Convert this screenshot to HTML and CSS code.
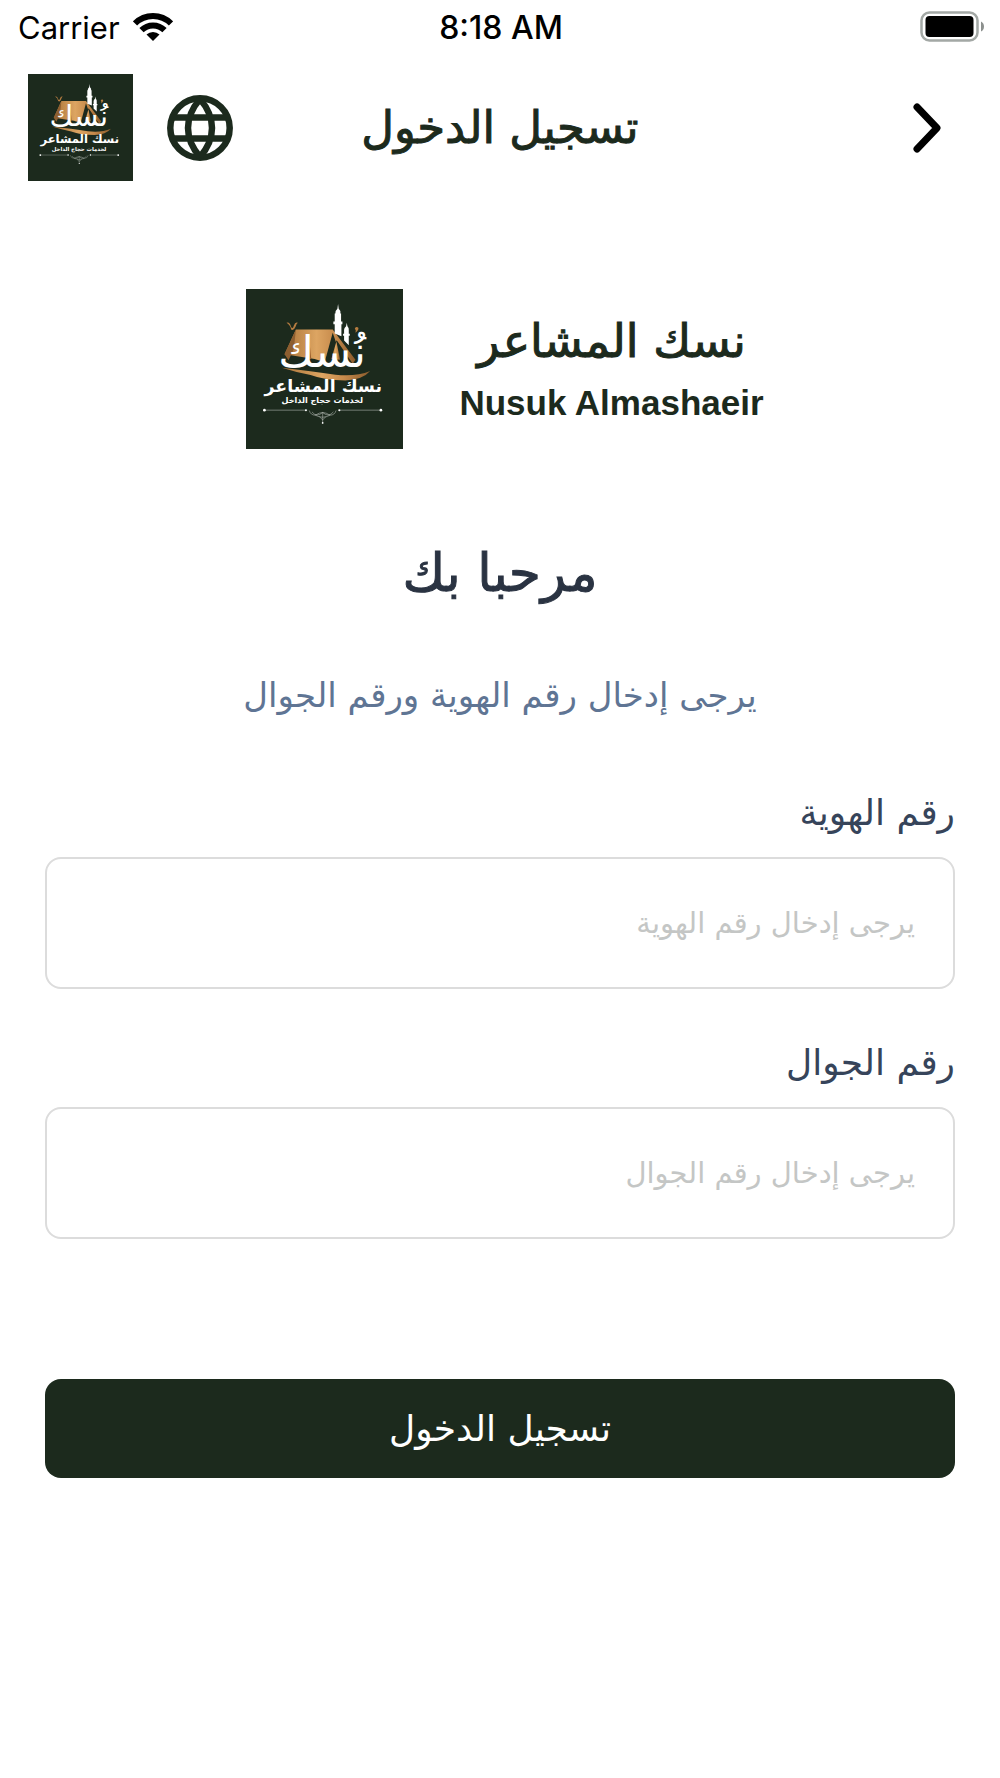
FILE: index.html
```html
<!DOCTYPE html>
<html lang="ar" dir="rtl">
<head>
<meta charset="utf-8">
<meta name="viewport" content="width=device-width, initial-scale=1">
<title>تسجيل الدخول</title>
<link rel="stylesheet" href="styles.css">
</head>
<body>
<svg class="defs" aria-hidden="true">
  <defs>
    <linearGradient id="gold" x1="0" y1="0" x2="1" y2="0">
      <stop offset="0" stop-color="#a87238"/>
      <stop offset=".45" stop-color="#dda562"/>
      <stop offset=".7" stop-color="#c78b4c"/>
      <stop offset="1" stop-color="#8a5a2b"/>
    </linearGradient>
    <symbol id="logo" viewBox="33 27 469 478" preserveAspectRatio="none">
      <rect x="33" y="27" width="469" height="478" fill="#1c2a1d"/>
      <path d="M154 128q9-4 13 10q5 12 9-2q4-12 12-8q-4 2-7 12q-6 14-13 8q-3-14-14-20z" fill="#b57c40"/>
      <path d="M358 145q4-7 10-3q4 6-8 16q3-8-2-13z" fill="#b57c40"/>
      <path d="M182 148L292 148L360 238L352 250L304 180L270 246L238 236L148 222z" fill="url(#gold)"/>
      <path d="M182 148L176 206L160 240L148 222zM220 160L214 236L228 236z" fill="#8d5e30"/>
      <path d="M292 158L268 246L324 250z" fill="#1c2a1d"/>
      <path d="M303 184L288 236L314 238z" fill="url(#gold)"/>
      <path d="M140 262Q230 272 300 283Q360 290 404 272Q382 298 330 300Q268 300 226 284Q184 276 140 262z" fill="url(#gold)"/>
      <path d="M308 72l2 14q7 6 5 14h2v24h4v8h-3v36l-20-8v-28h-4v-8h4v-24h2q-1-8 6-14z" fill="#fff"/>
      <path d="M334 128l2 10q5 5 4 11v12h3v6h-3v28l-14-14v-14h-3v-6h3v-12q0-6 6-11z" fill="#fff"/>
      <text class="logo-script" x="260" y="260" text-anchor="middle">نُسك</text>
      <text class="logo-name" x="264" y="334" text-anchor="middle">نسك المشاعر</text>
      <text class="logo-tag" x="261" y="369" text-anchor="middle">لخدمات حجاج الداخل</text>
      <g fill="none" stroke="#c9cec8" stroke-width="1.5">
        <path d="M86 389H216M308 389H438"/>
        <path d="M222 390q4 14 18 14q12-8 22-8q10 0 22 8q14 0 18-14M230 394q14 18 32 2q18 16 32-2M240 404q22 12 44 0M262 396v32M252 408l10 10l10-10"/>
      </g>
      <g fill="#fff"><circle cx="88" cy="389" r="4"/><circle cx="436" cy="389" r="4"/><circle cx="212" cy="389" r="3"/><circle cx="312" cy="389" r="3"/><circle cx="262" cy="427" r="2.5"/></g>
    </symbol>
  </defs>
</svg>

<div class="status" dir="ltr">
  <div class="carrier">
    <span>Carrier</span>
    <svg class="wifi" viewBox="0 0 40 29" aria-hidden="true">
      <g fill="none" stroke="#000" stroke-width="6">
        <path d="M2 11.500A25.500 25.500 0 0 1 38 11.500"/>
        <path d="M8.500 18.200A16.300 16.300 0 0 1 31.500 18.200"/>
      </g>
      <path d="M20 29L13.500 22.600A9.200 9.200 0 0 1 26.500 22.600z"/>
    </svg>
  </div>
  <time class="time">8:18 AM</time>
  <svg class="battery" viewBox="0 0 64 31" aria-hidden="true">
    <rect x="1.500" y="1.500" width="56" height="28" rx="8" fill="none" stroke="#a3a8a5" stroke-width="2.500"/>
    <rect x="5.500" y="5" width="48" height="21" rx="4"/>
    <path d="M61 10.500q3 1.500 3 5t-3 5z" fill="#8c908e"/>
  </svg>
</div>

<header class="topbar">
  <button class="icon-button back" type="button" aria-label="رجوع">
    <svg viewBox="0 0 32 52" aria-hidden="true"><path d="M5 5L25 26L5 47" fill="none" stroke="#000" stroke-width="7" stroke-linecap="round" stroke-linejoin="round"/></svg>
  </button>
  <h1 class="title">تسجيل الدخول</h1>
  <div class="tools">
    <button class="icon-button globe" type="button" aria-label="اللغة">
      <svg viewBox="0 0 66 66" fill="none" stroke="#1c2a1d" stroke-width="6.500" aria-hidden="true">
        <circle cx="33" cy="33" r="29.700"/>
        <path d="M33 4Q21 18 21 33T33 62M33 4Q45 18 45 33T33 62M5 22.500H61M5 43.500H61"/>
      </svg>
    </button>
    <svg class="logo-small" role="img" aria-label="نسك"><use href="#logo"/></svg>
  </div>
</header>

<main class="content">
  <section class="brand">
    <div class="brand-names">
      <p class="brand-ar">نسك المشاعر</p>
      <p class="brand-en" dir="ltr">Nusuk Almashaeir</p>
    </div>
    <svg class="logo-large" role="img" aria-label="نسك المشاعر"><use href="#logo"/></svg>
  </section>

  <h2 class="welcome">مرحبا بك</h2>
  <p class="hint">يرجى إدخال رقم الهوية ورقم الجوال</p>

  <form class="form">
    <div class="field">
      <label for="id-number">رقم الهوية</label>
      <input id="id-number" type="text" inputmode="numeric" placeholder="يرجى إدخال رقم الهوية">
    </div>
    <div class="field">
      <label for="mobile">رقم الجوال</label>
      <input id="mobile" type="text" inputmode="tel" placeholder="يرجى إدخال رقم الجوال">
    </div>
    <button class="submit" type="submit">تسجيل الدخول</button>
  </form>
</main>
</body>
</html>
```
FILE: styles.css
```css
* { box-sizing: border-box; }

body {
  margin: 0;
  background: #fff;
  color: #1c2a1d;
  font-family: "DejaVu Sans", sans-serif;
}

h1, h2, p { margin: 0; }
svg { display: block; }

.defs { position: absolute; width: 0; height: 0; }

.status {
  display: grid;
  grid-template-columns: 1fr auto 1fr;
  align-items: center;
  height: 56px;
  padding: 0 16px 0 18px;
  color: #000;
  font-family: Inter, sans-serif;
  font-size: 31px;
  line-height: 56px;
}
.carrier { display: flex; align-items: center; gap: 13px; }
.wifi { width: 40px; height: 29px; margin-bottom: 4px; }
.time { font-size: 32px; font-weight: 500; }
.battery { width: 64px; height: 31px; margin-bottom: 4px; justify-self: end; }

.topbar {
  display: grid;
  grid-template-columns: 1fr auto 1fr;
  align-items: center;
  padding: 18px 28px 0;
}
.icon-button {
  padding: 0;
  border: 0;
  background: none;
  cursor: pointer;
}
.back svg { width: 32px; height: 52px; }
.back { justify-self: start; padding-right: 28px; }
.globe svg { width: 66px; height: 66px; }

.title, .brand-ar, .welcome {
  font-weight: 400;
  -webkit-text-stroke: 1px currentColor;
}
.title {
  font-size: 45px;
  line-height: 48px;
}
.tools {
  display: flex;
  align-items: center;
  justify-content: flex-end;
  gap: 34px;
}
.logo-small { width: 105px; height: 107px; }

.logo-script { fill: #fff; font-size: 130px; }
.logo-name { fill: #fff; font-size: 52px; font-weight: 700; }
.logo-tag { fill: #fff; font-size: 24px; font-weight: 700; }

.content { padding: 108px 45px 48px; }

.brand {
  display: flex;
  align-items: center;
  justify-content: center;
  gap: 56px;
  padding-left: 10px;
  text-align: center;
}
.logo-large { width: 157px; height: 160px; }
.brand-names { padding-top: 4px; }
.brand-ar { font-size: 46px; line-height: 64px; }
.brand-en {
  font-family: "Liberation Sans", Arial, sans-serif;
  font-size: 35px;
  font-weight: 700;
  line-height: 60px;
}

.welcome {
  margin-top: 88px;
  color: #2a3342;
  font-size: 52px;
  line-height: 72px;
  text-align: center;
}
.hint {
  margin-top: 62px;
  color: #5f7594;
  font-size: 34px;
  line-height: 48px;
  text-align: center;
}

.form { margin-top: 70px; }
.field { margin-bottom: 50px; }
.field label {
  display: block;
  margin-bottom: 20px;
  color: #36445a;
  font-size: 36px;
  line-height: 48px;
}
.field input {
  display: block;
  width: 100%;
  height: 132px;
  padding: 0 38px;
  border: 2px solid #dcdcdc;
  border-radius: 16px;
  background: #fff;
  color: #36445a;
  font: 29px "DejaVu Sans", sans-serif;
}
.field input::placeholder { color: #c4c6c5; opacity: 1; }

.submit {
  display: block;
  width: 100%;
  height: 99px;
  margin-top: 140px;
  border: 0;
  border-radius: 16px;
  background: #1c2a1d;
  color: #fff;
  font: 36px "DejaVu Sans", sans-serif;
  cursor: pointer;
}
```
